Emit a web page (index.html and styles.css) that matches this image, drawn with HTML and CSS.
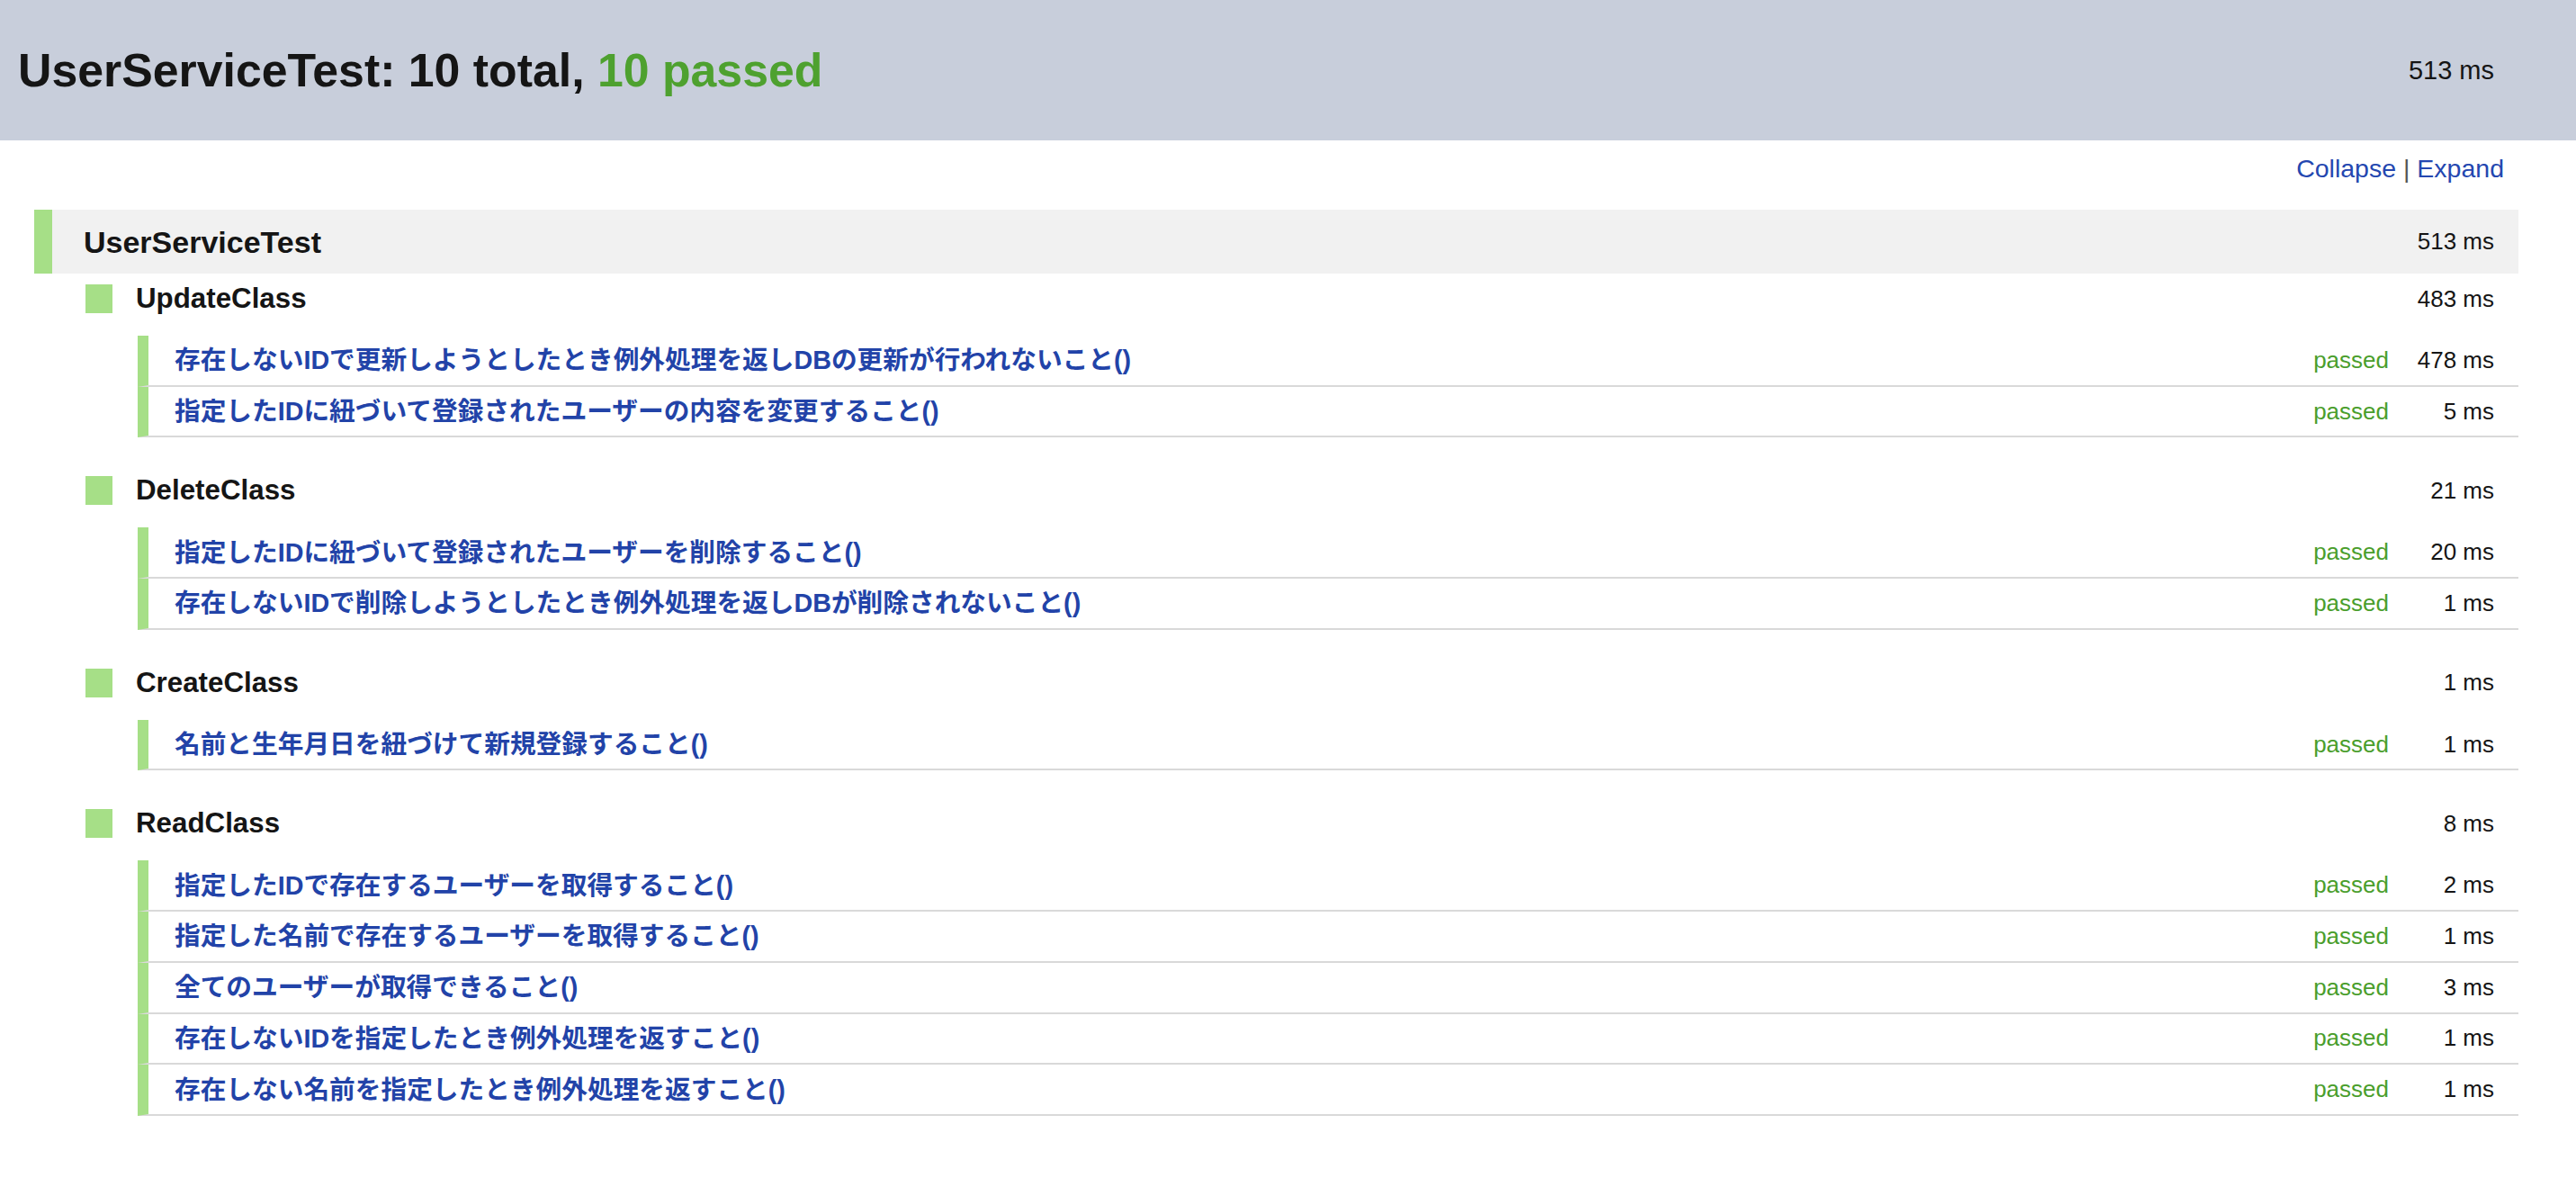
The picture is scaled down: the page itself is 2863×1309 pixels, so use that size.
FILE: index.html
```html
<!DOCTYPE html>
<html lang="ja">
<head>
<meta charset="utf-8">
<title>UserServiceTest</title>
<link rel="stylesheet" href="styles.css">
</head>
<body>
<header class="header">
  <h1 class="title">UserServiceTest: 10 total, <span class="ok">10 passed</span></h1>
  <span class="header-time">513 ms</span>
</header>
<main class="content">
  <div class="toolbar"><a class="link" href="#">Collapse</a> <span class="sep">|</span> <a class="link" href="#">Expand</a></div>
  <div class="suite">
    <span class="suite-name">UserServiceTest</span>
    <span class="time">513 ms</span>
  </div>

  <section class="klass">
    <div class="klass-head"><span class="square"></span><span class="klass-name">UpdateClass</span><span class="time">483 ms</span></div>
    <ul class="tests">
      <li class="test"><a class="test-name" href="#">存在しないIDで更新しようとしたとき例外処理を返しDBの更新が行われないこと()</a><span class="status">passed</span><span class="dur">478 ms</span></li>
      <li class="test"><a class="test-name" href="#">指定したIDに紐づいて登録されたユーザーの内容を変更すること()</a><span class="status">passed</span><span class="dur">5 ms</span></li>
    </ul>
  </section>

  <section class="klass">
    <div class="klass-head"><span class="square"></span><span class="klass-name">DeleteClass</span><span class="time">21 ms</span></div>
    <ul class="tests">
      <li class="test"><a class="test-name" href="#">指定したIDに紐づいて登録されたユーザーを削除すること()</a><span class="status">passed</span><span class="dur">20 ms</span></li>
      <li class="test"><a class="test-name" href="#">存在しないIDで削除しようとしたとき例外処理を返しDBが削除されないこと()</a><span class="status">passed</span><span class="dur">1 ms</span></li>
    </ul>
  </section>

  <section class="klass">
    <div class="klass-head"><span class="square"></span><span class="klass-name">CreateClass</span><span class="time">1 ms</span></div>
    <ul class="tests">
      <li class="test"><a class="test-name" href="#">名前と生年月日を紐づけて新規登録すること()</a><span class="status">passed</span><span class="dur">1 ms</span></li>
    </ul>
  </section>

  <section class="klass">
    <div class="klass-head"><span class="square"></span><span class="klass-name">ReadClass</span><span class="time">8 ms</span></div>
    <ul class="tests">
      <li class="test"><a class="test-name" href="#">指定したIDで存在するユーザーを取得すること()</a><span class="status">passed</span><span class="dur">2 ms</span></li>
      <li class="test"><a class="test-name" href="#">指定した名前で存在するユーザーを取得すること()</a><span class="status">passed</span><span class="dur">1 ms</span></li>
      <li class="test"><a class="test-name" href="#">全てのユーザーが取得できること()</a><span class="status">passed</span><span class="dur">3 ms</span></li>
      <li class="test"><a class="test-name" href="#">存在しないIDを指定したとき例外処理を返すこと()</a><span class="status">passed</span><span class="dur">1 ms</span></li>
      <li class="test"><a class="test-name" href="#">存在しない名前を指定したとき例外処理を返すこと()</a><span class="status">passed</span><span class="dur">1 ms</span></li>
    </ul>
  </section>
</main>
</body>
</html>
```

FILE: styles.css
```css
html, body {
  margin: 0;
  padding: 0;
  background: #ffffff;
}

body {
  font-family: "Liberation Sans", "Noto Sans CJK JP", sans-serif;
  font-size: 28.5px;
  color: #151515;
}

.header {
  height: 156px;
  box-sizing: border-box;
  background: #c8cedb;
  display: flex;
  align-items: center;
  justify-content: space-between;
  padding: 0 91px 0 20px;
}

.title {
  margin: 0;
  font-size: 51.8px;
  font-weight: bold;
  line-height: 60px;
  color: #151515;
}

.ok {
  color: #4ea12f;
}

.header-time {
  font-size: 29px;
  line-height: 33px;
  margin-top: 1px;
}

.content {
  padding: 0 64px 40px 38px;
}

.toolbar {
  text-align: right;
  line-height: 33px;
  padding: 15px 16px 29px 0;
}

.link {
  color: #2447b0;
  text-decoration: none;
}

.sep {
  color: #555555;
}

.suite {
  height: 71px;
  box-sizing: border-box;
  background: #f1f1f1;
  border-left: 20px solid #a6df87;
  display: flex;
  align-items: center;
  justify-content: space-between;
  padding: 0 27px 0 35px;
}

.suite-name {
  font-size: 34px;
  font-weight: bold;
  line-height: 40px;
}

.time {
  font-size: 26px;
  line-height: 33px;
}

.klass {
  padding-top: 12px;
  margin-bottom: 31px;
}

.klass-head {
  display: flex;
  align-items: center;
  height: 32px;
  margin: 0 27px 0 57px;
}

.square {
  width: 30px;
  height: 32px;
  background: #a6df87;
  flex: none;
}

.klass-name {
  flex: 1;
  margin-left: 26px;
  font-size: 31.3px;
  font-weight: bold;
  line-height: 36px;
}

.tests {
  list-style: none;
  margin: 25px 0 0 115px;
  padding: 0;
}

.test {
  display: flex;
  align-items: center;
  height: 56.7px;
  box-sizing: border-box;
  border-left: 12px solid #a6df87;
  border-bottom: 2px solid #d9d9d9;
  padding: 0 27px 0 29px;
}

.test-name {
  flex: 1;
  color: #2243a8;
  font-size: 28.7px;
  font-weight: bold;
  text-decoration: none;
  line-height: 34px;
  white-space: nowrap;
}

.status {
  color: #4a9e2c;
  font-size: 26px;
  line-height: 33px;
}

.dur {
  width: 117px;
  text-align: right;
  font-size: 26px;
  line-height: 33px;
}
```
